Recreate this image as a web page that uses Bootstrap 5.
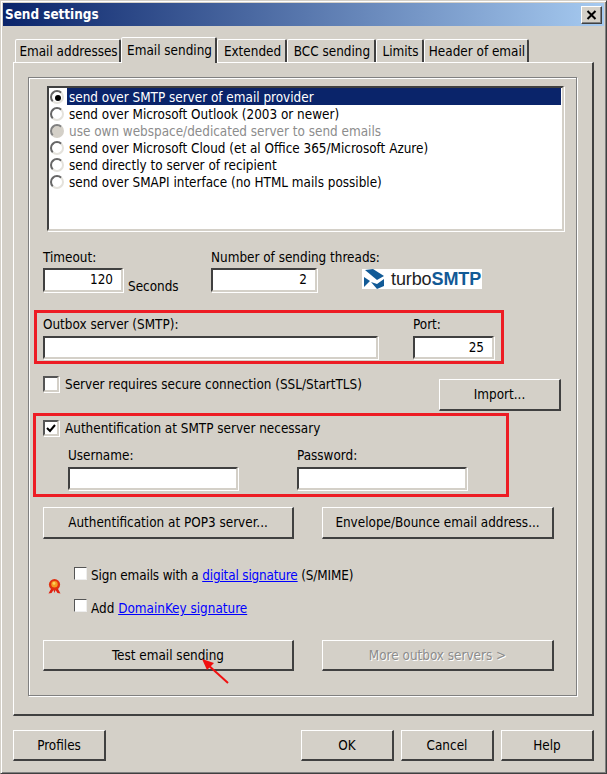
<!DOCTYPE html>
<html lang="en">
<head>
<meta charset="utf-8">
<title>Send settings</title>
<link rel="stylesheet" href="https://cdn.jsdelivr.net/npm/bootstrap@5.3.0/dist/css/bootstrap.min.css">
<style>
html,body{height:100%;margin:0;background:#d4d0c8;overflow:hidden}
body{font-family:"DejaVu Sans Condensed","Liberation Sans",Arial,sans-serif;font-size:13.4px;line-height:17px;color:#000}
.win-frame{position:relative;width:607px;height:774px;border:1px solid #d4d0c8;border-right-color:#404040;border-bottom-color:#404040;box-shadow:inset 1px 1px 0 #fff,inset -1px -1px 0 #808080;padding:2px 0 0 2px}
.title-strip{width:601px;height:23px;background:linear-gradient(90deg,#0a246a,#a6caf0);color:#fff;font-weight:700;font-size:13.4px;line-height:23px;padding-left:2px;padding-right:2px}
.close-box{width:21px;height:18px;background:#d4d0c8;border:1px solid;border-color:#fff #404040 #404040 #fff;box-shadow:inset -1px -1px 0 #808080;line-height:0}
.tab-row{margin:11px 0 0 12px;height:25px;position:relative;z-index:2;flex-wrap:nowrap;border:0}
.tab-item{box-sizing:border-box;height:23px;margin-top:2px;border:1px solid;border-color:#fff #404040 transparent #fff;border-width:1px 2px 0 1px;border-radius:2px 2px 0 0;padding:3px 0 0 2px;text-align:center;color:#000;background:#d4d0c8;white-space:nowrap}
.tab-item.tab-on{height:26px;margin-top:0;padding-top:4px;margin-bottom:-1px;margin-left:0}
.tab-sheet{width:581px;height:654px;margin-left:10px;border:1px solid;border-color:#fff #404040 #404040 #fff;border-width:1px 2px 2px 1px;padding:14px 0 0 14px}
.group-etched{position:relative;width:549px;height:619px;border:1px solid #808080;box-shadow:1px 1px 0 #fff,inset 1px 1px 0 #fff;padding:8px 0 0 14px}
.list-wrap{width:517px;height:145px;margin-left:4px;background:#fff;border:2px solid;border-color:#404040 #d4d0c8 #d4d0c8 #404040;box-shadow:1px 1px 0 #fff;display:block;padding:0;border-radius:0}
.list-line{display:flex;align-items:center;height:17px;border:0;padding:0;background:transparent;color:#000}
.list-line .pick{flex:none;box-sizing:border-box;width:14px;height:14px;margin:0 3px 0 1px;border-radius:50%;background:#fff;border:2px solid;border-color:#666 #e4e2dc #e4e2dc #666;position:relative}
.list-line .pick.pick-on::after{content:"";position:absolute;left:3px;top:3px;width:6px;height:6px;border-radius:50%;background:#000}
.list-line .pick.pick-off{background:#d4d0c8;border-color:#808080 #d4d0c8 #d4d0c8 #808080}
.list-line .txt{flex:1;height:17px;padding-left:2px;line-height:19px}
.list-line.sel .txt{background:#0a246a;color:#fff;margin-right:1px}
.list-line.dim .txt{color:#8c8c8c}
.win-input{display:block;box-sizing:border-box;height:23px;background:#fff;border:2px solid;border-color:#404040 #d4d0c8 #d4d0c8 #404040;box-shadow:1px 1px 0 #fff;text-align:right;padding:0 8px 0 0;line-height:19px;border-radius:0;font-size:13.4px;min-height:0;color:#000}
.row-time{margin-top:18px;height:43px}
.row-time .win-input{height:24px}
.lbl{height:17px;margin-bottom:2px;white-space:nowrap}
.col-time{width:168px}.col-threads{width:151px}
.sec-txt{margin:0 0 -3px 5px;align-self:flex-end}
.logo-box{margin-top:20px;width:120px;height:20px;background:#fff;padding-left:1px;overflow:hidden}
.logo-txt{font-family:"Liberation Sans",Arial,sans-serif;font-size:18px;line-height:20px;letter-spacing:-.1px;color:#222;margin-left:5px;white-space:nowrap}
.logo-txt b{color:#125a96}
.red-a{box-sizing:border-box;width:470px;height:54px;margin:18px 0 0 -9px;border:3px solid #ed1c24;padding:3px 0 0 6px}
.red-a .lbl,.red-b .lbl{margin-bottom:3px}
.col-server{width:370px}.col-port{width:81px}
.w-335{width:335px}.w-81{width:81px}.w-170{width:170px}
.row-ssl{width:518px;height:35px;margin-top:12px}
.chk{flex:none;box-sizing:border-box;width:16px;height:16px;background:#fff;border:2px solid;border-color:#555 #d4d0c8 #d4d0c8 #555;box-shadow:1px 1px 0 #fff;position:relative}
.chk-sm{width:13px;height:13px;border-width:1px;border-color:#555 #eee #eee #555;box-shadow:none}
.chk-txt{margin-left:6px}
.chk-txt-auth{height:16px;line-height:18px}
.win-btn{box-sizing:border-box;background:#d4d0c8;border:1px solid;border-color:#fff #404040 #404040 #fff;border-width:1px 2px 2px 1px;border-radius:0;padding:0;color:#000;font-size:13.4px;line-height:17px;display:flex;align-items:center;justify-content:center;white-space:nowrap;box-shadow:none}
.win-btn:disabled,.win-btn.disabled{background:#d4d0c8;color:#8c8c8c;text-shadow:1px 1px 0 #fff;opacity:1;border-color:#fff #404040 #404040 #fff}
.b-import{width:122px;height:32px;margin-top:3px}
.red-b{box-sizing:border-box;width:476px;height:84px;margin:2px 0 0 -10px;border:3px solid #ed1c24;padding:4px 0 0 7px}
.cred-row{margin:11px 0 0 25px}
.col-user{width:229px}
.row-btn-a{margin-top:10px;column-gap:28px}
.row-btn-a .win-btn{height:32px}
.row-btn-c{margin-top:23px;column-gap:28px}
.row-btn-c .win-btn{height:31px}
.w-250{width:251px}.w-232{width:232px}
.sig-block{margin:28px 0 0 5px}
.ribbon-ic{flex:none;margin:12px 13px 0 0;display:block}
.sig-line{height:17px;white-space:nowrap}
.sig-line+.sig-line{margin-top:16px}
.sig-line+.sig-line .chk{margin-top:-1px}
.sig-line a{color:#0000ff;text-decoration:underline}
.sig-tight{letter-spacing:-.15px}
.foot-row{width:581px;margin:14px 0 0 10px;gap:7px}
.foot-row .win-btn{width:93px;height:31px}
.arrow-mark{position:absolute;left:199px;top:655px;z-index:5}
</style>
</head>
<body>
<div class="win-frame">
  <div class="title-strip d-flex justify-content-between align-items-center">
    <span>Send settings</span>
    <span class="close-box d-flex align-items-center justify-content-center"><svg width="11" height="10" viewBox="0 0 11 10"><path d="M1.5 1 9.5 9M9.5 1 1.5 9" stroke="#000" stroke-width="2" fill="none"/></svg></span>
  </div>
  <ul class="nav tab-row d-flex list-unstyled mb-0">
    <li class="tab-item" style="width:106px">Email addresses</li>
    <li class="tab-item tab-on" style="width:96px">Email sending</li>
    <li class="tab-item" style="width:70px">Extended</li>
    <li class="tab-item" style="width:89px">BCC sending</li>
    <li class="tab-item" style="width:48px">Limits</li>
    <li class="tab-item" style="width:105px">Header of email</li>
  </ul>
  <div class="tab-sheet">
    <div class="group-etched">
      <div class="list-wrap list-group">
        <div class="list-line sel"><span class="pick pick-on"></span><span class="txt">send over SMTP server of email provider</span></div>
        <div class="list-line"><span class="pick"></span><span class="txt">send over Microsoft Outlook (2003 or newer)</span></div>
        <div class="list-line dim"><span class="pick pick-off"></span><span class="txt">use own webspace/dedicated server to send emails</span></div>
        <div class="list-line"><span class="pick"></span><span class="txt">send over Microsoft Cloud (et al Office 365/Microsoft Azure)</span></div>
        <div class="list-line"><span class="pick"></span><span class="txt">send directly to server of recipient</span></div>
        <div class="list-line"><span class="pick"></span><span class="txt">send over SMAPI interface (no HTML mails possible)</span></div>
      </div>

      <div class="row-time d-flex">
        <div class="col-time">
          <div class="lbl">Timeout:</div>
          <div class="d-flex"><span class="win-input" style="width:80px">120</span><span class="sec-txt">Seconds</span></div>
        </div>
        <div class="col-threads">
          <div class="lbl">Number of sending threads:</div>
          <span class="win-input" style="width:106px">2</span>
        </div>
        <div class="logo-box d-flex align-items-center">
          <svg width="23" height="20" viewBox="0 0 23 20"><path d="M2 1 10 0 21 7 14 11Z" fill="#125a96"/><path d="M1 8 7 12 1 18Z" fill="#125a96"/><path d="M8 13 14 15 21 10 21 17 14 20Z" fill="#125a96"/></svg>
          <span class="logo-txt">turbo<b>SMTP</b></span>
        </div>
      </div>

      <div class="red-a d-flex">
        <div class="col-server"><div class="lbl">Outbox server (SMTP):</div><span class="win-input w-335"></span></div>
        <div class="col-port"><div class="lbl">Port:</div><span class="win-input w-81">25</span></div>
      </div>

      <div class="row-ssl d-flex align-items-start">
        <span class="chk"></span><span class="chk-txt">Server requires secure connection (SSL/StartTLS)</span>
        <button type="button" class="btn win-btn b-import ms-auto">Import...</button>
      </div>

      <div class="red-b">
        <div class="d-flex"><span class="chk d-flex align-items-center justify-content-center"><svg width="10" height="10" viewBox="0 0 10 10"><path d="M1 5 4 8 9 2" stroke="#000" stroke-width="2" fill="none"/></svg></span><span class="chk-txt chk-txt-auth">Authentification at SMTP server necessary</span></div>
        <div class="cred-row d-flex">
          <div class="col-user"><div class="lbl">Username:</div><span class="win-input w-170"></span></div>
          <div><div class="lbl">Password:</div><span class="win-input w-170"></span></div>
        </div>
      </div>

      <div class="row-btn-a d-flex">
        <button type="button" class="btn win-btn w-250">Authentification at POP3 server...</button>
        <button type="button" class="btn win-btn w-232">Envelope/Bounce email address...</button>
      </div>

      <div class="sig-block d-flex">
        <svg class="ribbon-ic" width="13" height="15" viewBox="0 0 13 15"><path d="M3.5 9 0.5 14.5 3.5 14 5.5 11 6.5 14 7.5 11 9.5 14 12.5 14.5 9.5 9Z" fill="#e02010"/><circle cx="6.5" cy="5.6" r="5.6" fill="#e03010"/><circle cx="6.5" cy="5.2" r="3.2" fill="#f59a20"/><circle cx="6" cy="4.4" r="1.4" fill="#ffd060"/></svg>
        <div>
          <div class="sig-line d-flex"><span class="chk chk-sm"></span><span class="ms-1 sig-tight">Sign emails with a <a href="#">digital signature</a> (S/MIME)</span></div>
          <div class="sig-line d-flex"><span class="chk chk-sm"></span><span class="ms-1">Add <a href="#">DomainKey signature</a></span></div>
        </div>
      </div>

      <div class="row-btn-c d-flex">
        <button type="button" class="btn win-btn w-250">Test email sending</button>
        <button type="button" class="btn win-btn w-232" disabled>More outbox servers &gt;</button>
      </div>
    </div>
  </div>
  <div class="foot-row d-flex">
    <button type="button" class="btn win-btn me-auto">Profiles</button>
    <button type="button" class="btn win-btn">OK</button>
    <button type="button" class="btn win-btn">Cancel</button>
    <button type="button" class="btn win-btn">Help</button>
  </div>
  <svg class="arrow-mark" width="32" height="30" viewBox="0 0 32 30"><path d="M28 27 7 8" stroke="#f01010" stroke-width="2" fill="none"/><path d="M2 3 14 7 7 14Z" fill="#f01010"/></svg>
</div>
<script src="https://cdn.jsdelivr.net/npm/bootstrap@5.3.0/dist/js/bootstrap.bundle.min.js"></script>
</body>
</html>
